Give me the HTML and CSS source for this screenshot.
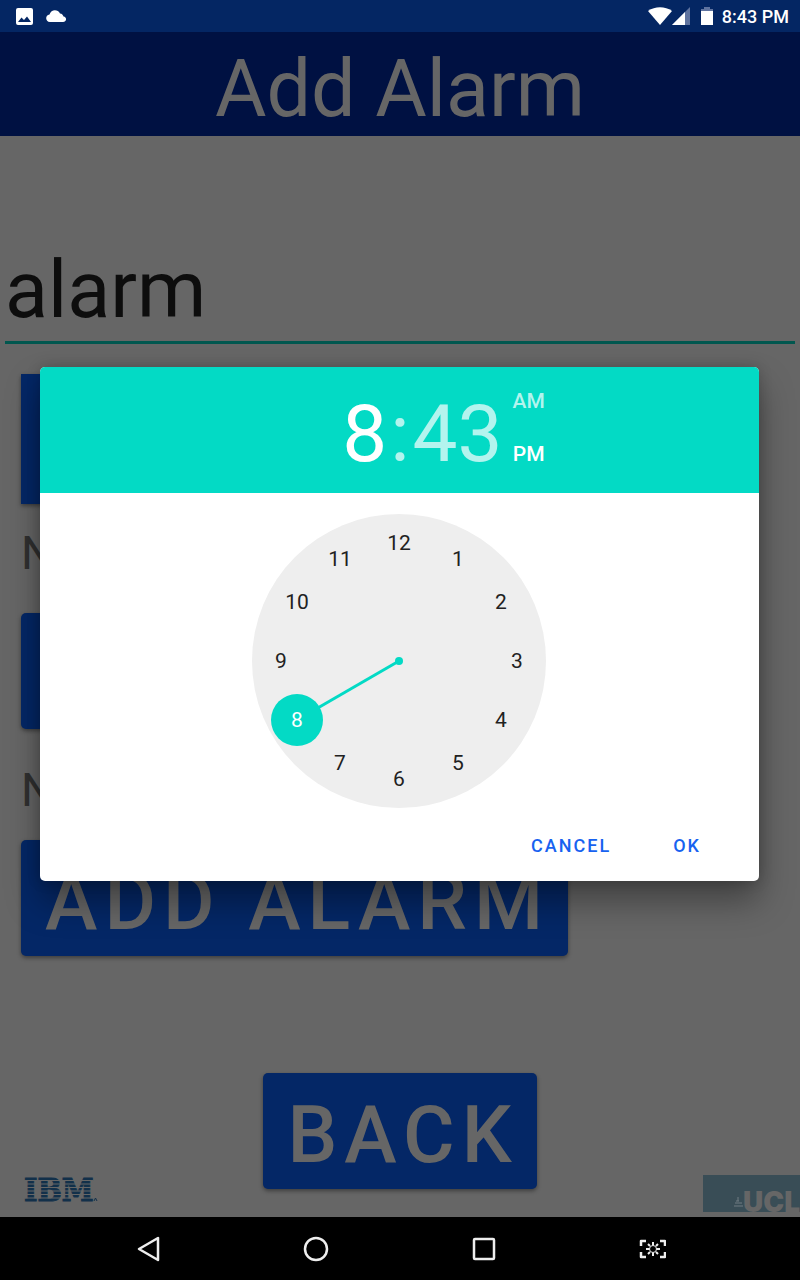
FILE: index.html
```html
<!DOCTYPE html>
<html lang="en">
<head>
<meta charset="utf-8">
<meta name="viewport" content="width=device-width, initial-scale=1">
<title>Add Alarm</title>
<link rel="stylesheet" href="styles.css">
</head>
<body>
<div class="status">
  <svg width="17" height="17" viewBox="0 0 17 17" aria-hidden="true"><path fill="#fff" fill-rule="evenodd" d="M2 0h13a2 2 0 0 1 2 2v13a2 2 0 0 1-2 2H2a2 2 0 0 1-2-2V2a2 2 0 0 1 2-2zM2 14h13L11 8.500 8 12 5.500 9.500z"/></svg>
  <svg class="cloud" width="21" height="12" viewBox="0 0 21 12" aria-hidden="true"><path fill="#fff" d="M4 12C-1 12-1 5 3.500 4.500 5-1 12-1 14 3.500c2 0 3 1.500 3.500 3C21 7 21 12 17 12z"/></svg>
  <span class="status-right">
    <svg width="24" height="18" viewBox="0 0 24 18" aria-hidden="true"><path fill="#fff" d="M12 18 0 4c7-5 17-5 24 0z"/></svg>
    <svg width="18" height="18" viewBox="0 0 18 18" aria-hidden="true"><path fill="#5f739f" d="M18 0v18H0z"/><path fill="#fff" d="M13 5v13H0z"/></svg>
    <svg class="battery" width="12" height="18" viewBox="0 0 12 18" aria-hidden="true"><path fill="#5f739f" d="M3 0h6v2h3v3H0V2h3z"/><path fill="#fff" d="M0 4h12v14H0z"/></svg>
    <time>8:43 PM</time>
  </span>
</div>
<header class="title-bar"><h1>Add Alarm</h1></header>
<main class="page">
  <input class="name" type="text" value="alarm" aria-label="Alarm name">
  <div class="fields">
    <button class="btn square" type="button" aria-label="Date"></button>
    <p class="value">N</p>
    <button class="btn blank" type="button" aria-label="Time"></button>
    <p class="value second">N</p>
    <button class="btn" type="button">ADD ALARM</button>
  </div>
  <div class="bottom">
    <svg class="ibm" width="76" height="38" viewBox="0 -4 76 38" role="img" aria-label="IBM">
      <text x="0" y="26" class="ibm-text">IBM</text>
      <path class="ibm-lines" d="M-1 5.500h70M-1 9h70M-1 12.500h70M-1 16h70M-1 19.500h70M-1 23h70"/>
      <path d="m70 26 1.500-3 1.500 3" stroke="#12304a" fill="none"/>
    </svg>
    <button class="btn" type="button">BACK</button>
    <div class="ucl">
      <svg width="9" height="10" viewBox="0 0 9 10" aria-hidden="true"><path d="M0 9h9M1 6h7M2 4h3M4 4V0" stroke="#707c82" fill="none"/></svg>
      <span>UCL</span>
    </div>
  </div>
</main>
<div class="overlay">
  <section class="dialog" role="dialog" aria-label="Select time">
    <div class="time-head">
      <div class="digits"><button type="button" class="on">8</button><span>:</span><button type="button">43</button></div>
      <div class="ampm"><button type="button">AM</button><button type="button" class="on">PM</button></div>
    </div>
    <svg class="clock" width="294" height="294" viewBox="-147 -147 294 294">
      <circle r="147" fill="#eee"/>
      <path d="M0 0-102 59" stroke="#03dac5" stroke-width="3"/>
      <circle r="4" fill="#03dac5"/>
      <circle cx="-102" cy="59" r="26" fill="#03dac5"/>
      <g class="nums">
        <text x="0" y="-111">12</text><text x="59" y="-95">1</text><text x="102" y="-52">2</text>
        <text x="118" y="7">3</text><text x="102" y="66">4</text><text x="59" y="109">5</text>
        <text x="0" y="125">6</text><text x="-59" y="109">7</text><text x="-102" y="66" class="sel">8</text>
        <text x="-118" y="7">9</text><text x="-102" y="-52">10</text><text x="-59" y="-95">11</text>
      </g>
    </svg>
    <div class="actions"><button type="button">CANCEL</button><button type="button">OK</button></div>
  </section>
</div>
<nav class="nav">
  <button type="button" aria-label="Back"><svg width="28" height="28" viewBox="-14 -14 28 28"><path d="M10-11v22L-9 0z"/></svg></button>
  <button type="button" aria-label="Home"><svg width="28" height="28" viewBox="-14 -14 28 28"><circle r="11"/></svg></button>
  <button type="button" aria-label="Recent apps"><svg width="28" height="28" viewBox="-14 -14 28 28"><rect x="-10" y="-10" width="20" height="20" rx="1"/></svg></button>
  <button type="button" aria-label="Screenshot"><svg width="28" height="28" viewBox="-14 -14 28 28"><path d="M-11-3v-5h5M8-8h5v5M13 3v5H8M-6 8h-5V3" stroke-width="2.500"/><path stroke-width="2" d="M1-7v3.500M1 3.500V7M-6 0h3.500M4.500 0H8M-4-5l2 2M4 3l2 2M6-5 4-3M-2 3l-2 2"/><circle cx="1" r="3.500" stroke-width="1"/></svg></button>
</nav>
</body>
</html>
```
FILE: styles.css
```css
* { box-sizing: border-box; }

body {
  margin: 0;
  min-height: 100vh;
  display: flex;
  flex-direction: column;
  position: relative;
  background: #666;
  font-family: Roboto, sans-serif;
}

button {
  font: inherit;
  letter-spacing: inherit;
  border: 0;
  padding: 0;
  background: none;
  color: inherit;
}
h1, p { margin: 0; }
svg { display: block; flex: none; }

.status {
  display: flex;
  align-items: center;
  height: 32px;
  padding: 0 11px 0 16px;
  background: #042663;
  color: #fff;
  font-size: 18px;
  font-weight: 500;
}
.cloud { margin-left: 13px; }
.status-right { display: flex; align-items: center; margin-left: auto; }
.battery { margin: 0 9px 0 11px; }

.title-bar {
  height: 104px;
  padding-top: 10px;
  background: #001142;
  color: #666;
  text-align: center;
}
h1 { font-size: 79px; line-height: 94px; font-weight: 400; }

.page { flex: 1; display: flex; flex-direction: column; }
.name {
  margin: 96px 5px 0;
  height: 112px;
  padding: 11px 0 5px;
  border: 0;
  border-bottom: 3px solid #01574f;
  border-radius: 0;
  outline: 0;
  background: none;
  color: #0d0d0d;
  font: 400 79px/94px Roboto, sans-serif;
}
.fields {
  display: flex;
  flex-direction: column;
  align-items: flex-start;
  padding: 30px 21px 0;
}
.btn {
  min-height: 116px;
  padding: 15px 18px 7px 24px;
  border-radius: 5px;
  background: #042766;
  box-shadow: 0 2px 4px rgba(0, 0, 0, .4);
  color: #666;
  font-size: 79px;
  line-height: 94px;
  font-weight: 500;
  letter-spacing: 7px;
  white-space: nowrap;
}
.square { width: 420px; height: 130px; border-radius: 0; }
.blank { width: 420px; }
.value { margin: 22px 0 33px; font-size: 46px; line-height: 54px; color: #303030; }
.second { margin: 34px 0 23px; }

.bottom {
  display: grid;
  grid-template-columns: 1fr auto 1fr;
  align-items: end;
  margin-top: auto;
  padding-bottom: 5px;
}
.bottom .btn { margin-bottom: 23px; }
.ibm { margin: 0 0 3px 24px; }
.ibm-text {
  font: bold 32px "DejaVu Serif Condensed", "DejaVu Serif", serif;
  fill: #12304a;
  stroke: #12304a;
  stroke-width: 1;
}
.ibm-lines { stroke: #666; stroke-width: 1; }
.ucl {
  justify-self: end;
  display: flex;
  align-items: center;
  justify-content: flex-end;
  width: 97px;
  height: 37px;
  padding-top: 16px;
  overflow: hidden;
  background: #394d56;
  color: #666;
  font: 900 28px/28px Inter, sans-serif;
}

.overlay {
  position: absolute;
  inset: 32px 0 65px;
  display: flex;
  align-items: center;
  justify-content: center;
  padding: 0 41px 0 40px;
}
.dialog {
  width: 100%;
  border-radius: 5px;
  overflow: hidden;
  background: #fff;
  box-shadow: 0 20px 34px rgba(0, 0, 0, .36), 0 0 14px rgba(0, 0, 0, .2);
}
.time-head {
  display: flex;
  justify-content: center;
  height: 126px;
  padding: 20px 0 0 88px;
  background: #03dac5;
  color: #b3f4ee;
}
.digits {
  display: flex;
  align-items: flex-start;
  gap: 3px;
  font-size: 80px;
  line-height: 94px;
}
.ampm {
  display: flex;
  flex-direction: column;
  gap: 29px;
  margin-left: 10px;
  padding-top: 2px;
  font-size: 21px;
  line-height: 24px;
  font-weight: 500;
}
.on { color: #fff; }
.clock { margin: 21px auto 0 212px; margin-inline: calc(50% - 148px) auto; }
.nums { font-size: 21px; text-anchor: middle; fill: #212121; }
.nums .sel { fill: #fff; }
.actions {
  display: flex;
  justify-content: flex-end;
  gap: 62px;
  padding: 27px 58px 24px;
  color: #1762f0;
  font-size: 18px;
  line-height: 22px;
  font-weight: 500;
  letter-spacing: 2px;
}

.nav {
  display: flex;
  justify-content: center;
  height: 63px;
  background: #000;
}
.nav button { flex: 0 1 168px; display: grid; place-items: center; }
.nav svg { fill: none; stroke: #eee; stroke-width: 2.500; stroke-linejoin: round; }
```
